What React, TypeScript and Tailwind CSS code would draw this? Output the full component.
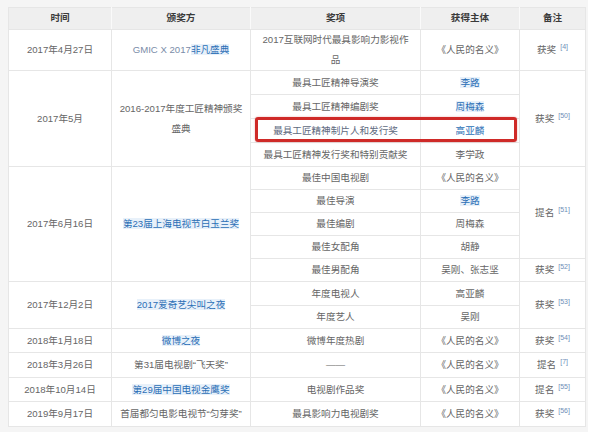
import React from "react";

const F = { fontFamily: '"Liberation Sans", "Noto Sans CJK SC", sans-serif' };

function Link({ children, hl = true }: { children: React.ReactNode; hl?: boolean }) {
  return (
    <span className={hl ? "text-[#2b6fb6] bg-[#e8f1fa]" : "text-[#2b6fb6]"}>{children}</span>
  );
}

function Note({ t, r }: { t: string; r: string }) {
  return (
    <span className="whitespace-nowrap">
      {t}
      <span className="inline-block ml-[4px] text-[7px] leading-none text-[#6f8fb8] relative top-[-4px]">[{r}]</span>
    </span>
  );
}

const base = "border border-[#e6e6e6] text-center align-middle py-0 leading-[20px]";
const td = base + " px-[6px]";

export default function App() {
  return (
    <div className="w-[600px] h-[432px] bg-white overflow-hidden" style={F}>
      <div className="w-[588px] h-[432px] bg-[#f5f5f5] pl-[8px] pt-[7px] relative">
        <table className="border-collapse table-fixed bg-white text-[9.6px] text-[#666]">
          <colgroup>
            <col className="w-[103px]" />
            <col className="w-[139px]" />
            <col className="w-[170px]" />
            <col className="w-[99px]" />
            <col className="w-[66px]" />
          </colgroup>
          <thead>
            <tr className="h-[22px] bg-[#efefef] text-[#3a3a3a] font-bold">
              <th className="border border-[#e6e6e6] border-r-[#fafafa] font-bold">时间</th>
              <th className="border border-[#e6e6e6] border-r-[#fafafa] font-bold">颁奖方</th>
              <th className="border border-[#e6e6e6] border-r-[#fafafa] font-bold">奖项</th>
              <th className="border border-[#e6e6e6] border-r-[#fafafa] font-bold">获得主体</th>
              <th className="border border-[#e6e6e6] font-bold">备注</th>
            </tr>
          </thead>
          <tbody>
            <tr className="h-[40px]">
              <td className={td}>2017年4月27日</td>
              <td className={td}>
                <span className="text-[#7a8ca8]">GMIC X 2017</span>
                <Link>非凡盛典</Link>
              </td>
              <td className={td}>
                2017互联网时代最具影响力影视作
                <br />
                品
              </td>
              <td className={td}>《人民的名义》</td>
              <td className={td}><Note t="获奖" r="4" /></td>
            </tr>

            <tr className="h-[24px]">
              <td className={td} rowSpan={4}>2017年5月</td>
              <td className={td} rowSpan={4}>2016-2017年度工匠精神颁奖盛典</td>
              <td className={td}>最具工匠精神导演奖</td>
              <td className={td}><Link>李路</Link></td>
              <td className={td} rowSpan={4}><Note t="获奖" r="50" /></td>
            </tr>
            <tr className="h-[24px]">
              <td className={td}>最具工匠精神编剧奖</td>
              <td className={td}><Link>周梅森</Link></td>
            </tr>
            <tr className="h-[24px]">
              <td className={td + " text-[#5e6a80]"}>最具工匠精神制片人和发行奖</td>
              <td className={td}><Link hl={false}>高亚麟</Link></td>
            </tr>
            <tr className="h-[24px]">
              <td className={base + " px-[4px]"}>最具工匠精神发行奖和特别贡献奖</td>
              <td className={td}>李学政</td>
            </tr>

            <tr className="h-[23px]">
              <td className={td} rowSpan={5}>2017年6月16日</td>
              <td className={td} rowSpan={5}><Link>第23届上海电视节白玉兰奖</Link></td>
              <td className={td}>最佳中国电视剧</td>
              <td className={td}>《人民的名义》</td>
              <td className={td} rowSpan={4}><Note t="提名" r="51" /></td>
            </tr>
            <tr className="h-[23px]">
              <td className={td}>最佳导演</td>
              <td className={td}><Link>李路</Link></td>
            </tr>
            <tr className="h-[23px]">
              <td className={td}>最佳编剧</td>
              <td className={td}>周梅森</td>
            </tr>
            <tr className="h-[23px]">
              <td className={td}>最佳女配角</td>
              <td className={td}>胡静</td>
            </tr>
            <tr className="h-[23px]">
              <td className={td}>最佳男配角</td>
              <td className={td}>吴刚、张志坚</td>
              <td className={td}><Note t="获奖" r="52" /></td>
            </tr>

            <tr className="h-[24px]">
              <td className={td} rowSpan={2}>2017年12月2日</td>
              <td className={td} rowSpan={2}><Link>2017爱奇艺尖叫之夜</Link></td>
              <td className={td}>年度电视人</td>
              <td className={td}>高亚麟</td>
              <td className={td} rowSpan={2}><Note t="获奖" r="53" /></td>
            </tr>
            <tr className="h-[23px]">
              <td className={td}>年度艺人</td>
              <td className={td}>吴刚</td>
            </tr>

            <tr className="h-[24px]">
              <td className={td}>2018年1月18日</td>
              <td className={td}><Link>微博之夜</Link></td>
              <td className={td}>微博年度热剧</td>
              <td className={td}>《人民的名义》</td>
              <td className={td}><Note t="获奖" r="54" /></td>
            </tr>
            <tr className="h-[25px]">
              <td className={td}>2018年3月26日</td>
              <td className={td}>第31届电视剧“飞天奖”</td>
              <td className={td}>——</td>
              <td className={td}>《人民的名义》</td>
              <td className={td}><Note t="提名" r="7" /></td>
            </tr>
            <tr className="h-[24px]">
              <td className={td}>2018年10月14日</td>
              <td className={td}><Link>第29届中国电视金鹰奖</Link></td>
              <td className={td}>电视剧作品奖</td>
              <td className={td}>《人民的名义》</td>
              <td className={td}><Note t="提名" r="55" /></td>
            </tr>
            <tr className="h-[25px]">
              <td className={td}>2019年9月17日</td>
              <td className={td}>首届都匀电影电视节“匀芽奖”</td>
              <td className={td}>最具影响力电视剧奖</td>
              <td className={td}>《人民的名义》</td>
              <td className={td}><Note t="获奖" r="56" /></td>
            </tr>
          </tbody>
        </table>
        <div className="absolute left-[255px] top-[117px] w-[262px] h-[25px] border-[3px] border-[#cf2a28] rounded-[3px] shadow-[0_0_2px_rgba(200,40,40,0.4)]" />
      </div>
    </div>
  );
}
